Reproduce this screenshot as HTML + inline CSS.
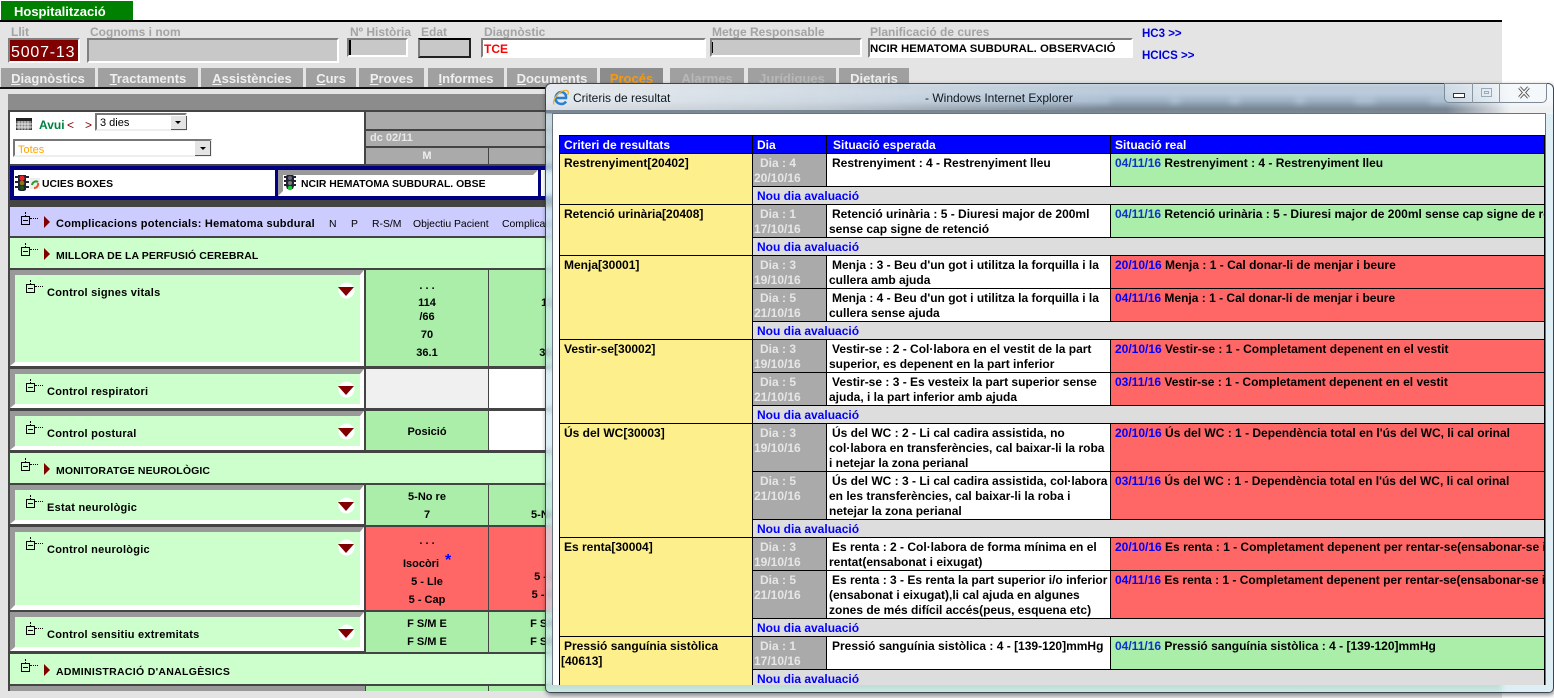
<!DOCTYPE html>
<html><head><meta charset="utf-8"><title>Hospitalització</title>
<style>
html,body{margin:0;padding:0;background:#fff}
#p{position:relative;width:1554px;height:698px;overflow:hidden;background:#fff;font:bold 12px/15px "Liberation Sans",sans-serif;color:#000}
#p div,#p svg,#p span.a{position:absolute}
.t{white-space:nowrap}
.l{color:#a3a3a3;top:25px;white-space:nowrap}
.in{box-sizing:border-box;border:2px solid;border-color:#808080 #fff #fff #808080;background:#c8c8c8}
.wh{background:#fff}
.tab{background:#a0a0a0;top:68px;height:19px;text-align:center;color:#efefef;font-size:13px;line-height:21px;white-space:nowrap;overflow:hidden}
.g{background:#ccffcc}
.dk{background:#444}
.f{font-size:11px;line-height:15px;letter-spacing:.25px;white-space:nowrap}
.c{width:122px;text-align:center;font-size:11px;line-height:15px;white-space:nowrap}
.cell{width:122px}
.tr{width:9px;height:9px;box-sizing:border-box;border:1px solid #000;background:transparent}
.tr:before{content:"";position:absolute;left:1px;top:3px;width:5px;height:1px;background:#000}
.tr:after{content:"";position:absolute;left:3px;top:-5px;height:4px;border-left:1px dotted #000}
.dot{width:8px;border-top:1px dotted #000;height:0}
.s{font-size:10.400px;font-weight:normal;top:217px;white-space:nowrap}
table{border-collapse:collapse;table-layout:fixed;width:985px;position:absolute;left:6px;top:21px;font:bold 12px/15px "Liberation Sans",sans-serif}
td{border:1px solid #000;padding:2px 0 0 1px;vertical-align:top;white-space:nowrap;overflow:hidden}
.h td{background:#0000ff;color:#fff;padding:2px 0 0 4px;vertical-align:top}
.y{background:#fdf08c;padding-left:4px!important}
.d{background:#aaaaaa;color:#e6e6e6;padding-left:1px}
.d i,.e i,.y i{font-style:normal;padding-left:3px}
.d i{padding-left:6px}
.e{background:#fff;padding-left:2px}
.ok{background:#aaeeaa;padding-left:4px}
.ko{background:#ff6666;padding-left:4px}
.ok b{color:#0a36c8}
.ko b{color:#0000ff}
.n{background:#dddddd;color:#0000ff;padding:2px 0 0 4px}
</style></head><body><div id="p">

<div style="left:0;top:0;width:1502px;height:698px;background:#e4e4e4"></div>
<div style="left:0;top:0;width:1502px;height:20px;background:#fff"></div>
<div style="left:1px;top:1px;width:132px;height:19px;background:#008000;color:#fff;line-height:21px;text-indent:13px;font-size:13px">Hospitalització</div>
<div style="left:0;top:20px;width:1502px;height:2px;background:#000"></div>

<div class="l" style="left:11px">Llit</div>
<div class="in" style="left:8px;top:38px;width:72px;height:25px;background:#800000;color:#fff;font:16px/25px 'Liberation Sans',sans-serif;letter-spacing:.8px;text-indent:1px">5007-13</div>
<div class="l" style="left:90px">Cognoms i nom</div>
<div class="in" style="left:87px;top:38px;width:252px;height:25px"></div>
<div class="l" style="left:350px">Nº Història</div>
<div class="in" style="left:347px;top:38px;width:61px;height:19px"><div style="left:0;top:0;width:2px;height:15px;background:#000"></div></div>
<div class="l" style="left:421px">Edat</div>
<div class="in" style="left:418px;top:38px;width:53px;height:20px;border-color:#000 #222 #222 #808080"></div>
<div class="l" style="left:484px">Diagnòstic</div>
<div class="in" style="left:481px;top:38px;width:225px;height:20px;background:#fff;color:#f00;line-height:18px;font-size:12px;text-indent:1px;font-weight:bold">TCE</div>
<div class="l" style="left:712px">Metge Responsable</div>
<div class="in" style="left:710px;top:38px;width:152px;height:19px;border-left:2px solid #808080"><div style="left:0;top:2px;width:1px;height:11px;background:#000"></div></div>
<div class="l" style="left:870px">Planificació de cures</div>
<div class="in" style="left:868px;top:38px;width:265px;height:20px;background:#fff;line-height:18px;font-size:11.400px;text-indent:0;white-space:nowrap">NCIR HEMATOMA SUBDURAL. OBSERVACIÓ</div>
<div class="t" style="left:1142px;top:27px;color:#0000d8;font-size:11.500px">HC3 &gt;&gt;</div>
<div class="t" style="left:1142px;top:49px;color:#0000d8;font-size:11.500px">HCICS &gt;&gt;</div>

<div class="tab" style="left:1px;width:94px"><u>D</u>iagnòstics</div>
<div class="tab" style="left:98px;width:100px"><u>T</u>ractaments</div>
<div class="tab" style="left:201px;width:102px"><u>A</u>ssistències</div>
<div class="tab" style="left:306px;width:50px"><u>C</u>urs</div>
<div class="tab" style="left:359px;width:65px"><u>P</u>roves</div>
<div class="tab" style="left:428px;width:76px"><u>I</u>nformes</div>
<div class="tab" style="left:507px;width:90px"><u>D</u>ocuments</div>
<div class="tab" style="left:600px;width:63px;background:#8c8c8c;color:#f59a10">Procés</div>
<div class="tab" style="left:670px;width:74px;color:#b8b8b8">Alarmes</div>
<div class="tab" style="left:748px;width:88px;color:#b8b8b8">Jurídiques</div>
<div class="tab" style="left:839px;width:70px">Dietaris</div>
<div style="left:0;top:87px;width:1502px;height:2px;background:#111"></div>

<!-- panel -->
<div style="left:8px;top:94px;width:1494px;height:16px;background:#8c8c8c"></div>
<div style="left:1110px;top:98px;width:60px;height:8px;background:#333"></div>
<div style="left:1180px;top:98px;width:50px;height:8px;background:#333"></div>
<div style="left:1240px;top:98px;width:55px;height:8px;background:#333"></div>
<div style="left:1305px;top:98px;width:50px;height:8px;background:#333"></div>
<div style="left:1375px;top:98px;width:55px;height:8px;background:#333"></div>
<div class="dk" style="left:8px;top:110px;width:1494px;height:581px"></div>

<div class="wh" style="left:10px;top:112px;width:354px;height:52px"></div>
<svg style="left:16px;top:118px" width="16" height="12" viewBox="0 0 16 12"><rect width="16" height="12" fill="#888"/><rect width="16" height="3" fill="#222"/><path d="M0 0V12M16 0V12M0 12H16" stroke="#111"/><path d="M3 3V12M6 3V12M9 3V12M12 3V12M0 6H16M0 9H16" stroke="#fff" stroke-width=".7"/></svg>
<div class="t" style="left:39px;top:118px;color:#008040">Avui</div>
<div class="t" style="left:67px;top:118px;color:#800000;font-weight:normal">&lt;</div>
<div class="t" style="left:85px;top:118px;color:#800000;font-weight:normal">&gt;</div>
<div class="in" style="left:95px;top:113px;width:92px;height:18px;background:#fff;font-weight:normal;font-size:11px;line-height:16px;text-indent:3px;border-color:#777 #eee #eee #777">3 dies<div style="left:74px;top:1px;width:15px;height:13px;background:#e4e4e4;border-right:1px solid #555;border-bottom:1px solid #555"></div><div style="left:78px;top:6px;border:3px solid transparent;border-top:3px solid #000;border-bottom:0"></div></div>
<div class="in" style="left:13px;top:139px;width:199px;height:18px;background:#fff;font-weight:normal;font-size:11px;line-height:18px;color:#ffa500;text-indent:3px;border-color:#777 #eee #eee #777">Totes<div style="left:180px;top:0;width:15px;height:14px;background:#e4e4e4;border-right:1px solid #555;border-bottom:1px solid #555"></div><div style="left:185px;top:6px;border:3px solid transparent;border-top:3px solid #000;border-bottom:0"></div></div>

<div style="left:366px;top:112px;width:1136px;height:17px;background:#aaa"></div>
<div style="left:366px;top:131px;width:1136px;height:15px;background:#aaa;color:#e8e8e8;font-size:11px;line-height:15px;text-indent:4px">dc 02/11</div>
<div style="left:366px;top:148px;width:122px;height:16px;background:#aaa;color:#eee;font-size:11px;line-height:16px;text-align:center">M</div>
<div style="left:489px;top:148px;width:122px;height:16px;background:#aaa"></div>

<div style="left:10px;top:166px;width:1492px;height:34px;background:#000080"></div>
<div class="wh" style="left:14px;top:170px;width:261px;height:26px"></div>
<div class="wh" style="left:278px;top:170px;width:260px;height:26px"></div>
<svg style="left:278px;top:170px" width="260" height="26"><path d="M0 0H260L255 5H5V21L0 26Z" fill="#999"/></svg>
<div class="wh" style="left:541px;top:170px;width:960px;height:26px"></div>
<svg style="left:15px;top:175px" width="25" height="16" viewBox="0 0 25 16"><path d="M0 1H3V0H11V1H14V3H11V6H14V8H11V11H14V13H11V15L9 16H5L3 15V13H0V11H3V8H0V6H3V3H0Z" fill="#223"/><circle cx="7" cy="3.200" r="2.600" fill="#f02020"/><circle cx="7" cy="8" r="2.300" fill="#8a7a10"/><circle cx="7" cy="12.800" r="2.100" fill="#1a5a1a"/><rect x="15" y="3" width="10" height="11" fill="#eee"/><path d="M17 10a4 4 0 0 1 6-3" stroke="#2a9a2a" stroke-width="2" fill="none"/><path d="M23 8a4 4 0 0 1-4 5" stroke="#e05a30" stroke-width="2" fill="none"/></svg>
<div class="f" style="left:42px;top:177px;font-size:10.400px;letter-spacing:0">UCIES BOXES</div>
<svg style="left:284px;top:174px" width="12" height="18" viewBox="0 0 12 18"><path d="M0 2h2l1-1h6l1 1h2v2h-2v2h2v2h-2v2h2v2h-2l-1 3H3l-1-3H0v-2h2V8H0V6h2V4H0z" fill="#223"/><circle cx="6" cy="4" r="2" fill="#667"/><circle cx="6" cy="9" r="2" fill="#778"/><circle cx="6" cy="14" r="2.300" fill="#10d030"/></svg>
<div class="f" style="left:301px;top:177px;font-size:10.400px;letter-spacing:0">NCIR HEMATOMA SUBDURAL. OBSE</div>

<!-- lavender -->
<div style="left:10px;top:207px;width:1492px;height:29px;background:#ccccff"></div>
<div class="tr" style="left:21px;top:216px"></div><div class="dot" style="left:30px;top:218px"></div>
<svg style="left:44px;top:216px" width="7" height="12"><path d="M0 0L6 6L0 12Z" fill="#800000"/></svg>
<div class="f" style="left:56px;top:217px">Complicacions potencials: Hematoma subdural</div>
<div class="s" style="left:329px">N</div>
<div class="s" style="left:351px">P</div>
<div class="s" style="left:372px">R-S/M</div>
<div class="s" style="left:413px">Objectiu Pacient</div>
<div class="s" style="left:502px">Complicacions</div>

<!-- group rows -->
<div class="g" style="left:10px;top:238px;width:1492px;height:30px"></div>
<div class="tr" style="left:21px;top:247px"></div><div class="dot" style="left:30px;top:249px"></div>
<svg style="left:44px;top:248px" width="7" height="12"><path d="M0 0L6 6L0 12Z" fill="#800000"/></svg>
<div class="f" style="left:56px;top:249px;font-size:10.500px;letter-spacing:.1px">MILLORA DE LA PERFUSIÓ CEREBRAL</div>

<!-- row Control signes -->
<svg style="left:10px;top:270px" width="354" height="96"><rect width="354" height="96" fill="#999"/><path d="M354 0V96H0L5 92H350V5Z" fill="#fff"/><rect x="5" y="5" width="345" height="87" fill="#ccffcc"/></svg>
<div class="tr" style="left:26px;top:284px"></div><div class="dot" style="left:35px;top:286px"></div>
<div class="f" style="left:47px;top:286px">Control signes vitals</div>
<svg style="left:338px;top:282px" width="17" height="17"><circle cx="8.500" cy="8.500" r="8" fill="#fff"/><path d="M0 5H16L8 14Z" fill="#800000"/></svg>
<div class="cell" style="left:366px;top:270px;height:96px;background:#aaeeaa"></div>
<div class="cell" style="left:489px;top:270px;height:96px;background:#aaeeaa"></div>
<div class="c" style="left:366px;top:279px">. . .</div>
<div class="c" style="left:366px;top:296px">114</div>
<div class="c" style="left:366px;top:310px">/66</div>
<div class="c" style="left:366px;top:328px">70</div>
<div class="c" style="left:366px;top:346px">36.1</div>
<div class="c" style="left:489px;top:296px">114</div>
<div class="c" style="left:489px;top:346px">36.1</div>

<!-- Control respiratori -->
<svg style="left:10px;top:369px" width="354" height="39"><rect width="354" height="39" fill="#999"/><path d="M354 0V39H0L5 35H350V5Z" fill="#fff"/><rect x="5" y="5" width="345" height="30" fill="#ccffcc"/></svg>
<div class="tr" style="left:26px;top:383px"></div><div class="dot" style="left:35px;top:385px"></div>
<div class="f" style="left:47px;top:385px">Control respiratori</div>
<svg style="left:338px;top:381px" width="17" height="17"><circle cx="8.500" cy="8.500" r="8" fill="#fff"/><path d="M0 5H16L8 14Z" fill="#800000"/></svg>
<div class="cell" style="left:366px;top:369px;height:39px;background:#f0f0f0"></div>
<div class="cell" style="left:489px;top:369px;height:39px;background:#fff"></div>

<!-- Control postural -->
<svg style="left:10px;top:411px" width="354" height="39"><rect width="354" height="39" fill="#999"/><path d="M354 0V39H0L5 35H350V5Z" fill="#fff"/><rect x="5" y="5" width="345" height="30" fill="#ccffcc"/></svg>
<div class="tr" style="left:26px;top:425px"></div><div class="dot" style="left:35px;top:427px"></div>
<div class="f" style="left:47px;top:427px">Control postural</div>
<svg style="left:338px;top:423px" width="17" height="17"><circle cx="8.500" cy="8.500" r="8" fill="#fff"/><path d="M0 5H16L8 14Z" fill="#800000"/></svg>
<div class="cell" style="left:366px;top:411px;height:39px;background:#aaeeaa"></div>
<div class="cell" style="left:489px;top:411px;height:39px;background:#fff"></div>
<div class="c" style="left:366px;top:425px">Posició</div>

<!-- Monitoratge -->
<div class="g" style="left:10px;top:453px;width:1492px;height:30px"></div>
<div class="tr" style="left:21px;top:462px"></div><div class="dot" style="left:30px;top:464px"></div>
<svg style="left:44px;top:463px" width="7" height="12"><path d="M0 0L6 6L0 12Z" fill="#800000"/></svg>
<div class="f" style="left:56px;top:464px;font-size:10.500px;letter-spacing:.1px">MONITORATGE NEUROLÒGIC</div>

<!-- Estat -->
<svg style="left:10px;top:485px" width="354" height="39"><rect width="354" height="39" fill="#999"/><path d="M354 0V39H0L5 35H350V5Z" fill="#fff"/><rect x="5" y="5" width="345" height="30" fill="#ccffcc"/></svg>
<div class="tr" style="left:26px;top:499px"></div><div class="dot" style="left:35px;top:501px"></div>
<div class="f" style="left:47px;top:501px">Estat neurològic</div>
<svg style="left:338px;top:497px" width="17" height="17"><circle cx="8.500" cy="8.500" r="8" fill="#fff"/><path d="M0 5H16L8 14Z" fill="#800000"/></svg>
<div class="cell" style="left:366px;top:485px;height:40px;background:#aaeeaa"></div>
<div class="cell" style="left:489px;top:485px;height:40px;background:#aaeeaa"></div>
<div class="c" style="left:366px;top:490px">5-No re</div>
<div class="c" style="left:366px;top:508px">7</div>
<div class="c" style="left:489px;top:508px">5-No re</div>

<!-- Control neurologic -->
<svg style="left:10px;top:527px" width="354" height="83"><rect width="354" height="83" fill="#999"/><path d="M354 0V83H0L5 78H350V5Z" fill="#fff"/><rect x="5" y="5" width="345" height="73" fill="#ccffcc"/></svg>
<div class="tr" style="left:26px;top:541px"></div><div class="dot" style="left:35px;top:543px"></div>
<div class="f" style="left:47px;top:543px">Control neurològic</div>
<svg style="left:338px;top:539px" width="17" height="17"><circle cx="8.500" cy="8.500" r="8" fill="#fff"/><path d="M0 5H16L8 14Z" fill="#800000"/></svg>
<div class="cell" style="left:366px;top:527px;height:83px;background:#ff6666"></div>
<div class="cell" style="left:489px;top:527px;height:83px;background:#ff6666"></div>
<div class="c" style="left:366px;top:534px">. . .</div>
<div class="c" style="left:360px;top:557px">Isocòri</div>
<div class="t" style="left:445px;top:553px;color:#0000ff;font-size:16px">*</div>
<div class="c" style="left:366px;top:575px">5 - Lle</div>
<div class="c" style="left:366px;top:593px">5 - Cap</div>
<div class="c" style="left:489px;top:570px">5 - Lle</div>
<div class="c" style="left:489px;top:588px">5 - Cap</div>

<!-- Sensitiu -->
<svg style="left:10px;top:612px" width="354" height="39"><rect width="354" height="39" fill="#999"/><path d="M354 0V39H0L5 35H350V5Z" fill="#fff"/><rect x="5" y="5" width="345" height="30" fill="#ccffcc"/></svg>
<div class="tr" style="left:26px;top:626px"></div><div class="dot" style="left:35px;top:628px"></div>
<div class="f" style="left:47px;top:628px">Control sensitiu extremitats</div>
<svg style="left:338px;top:624px" width="17" height="17"><circle cx="8.500" cy="8.500" r="8" fill="#fff"/><path d="M0 5H16L8 14Z" fill="#800000"/></svg>
<div class="cell" style="left:366px;top:612px;height:40px;background:#aaeeaa"></div>
<div class="cell" style="left:489px;top:612px;height:40px;background:#aaeeaa"></div>
<div class="c" style="left:366px;top:617px">F S/M E</div>
<div class="c" style="left:366px;top:635px">F S/M E</div>
<div class="c" style="left:489px;top:617px">F S/M E</div>
<div class="c" style="left:489px;top:635px">F S/M E</div>

<!-- Administracio -->
<div class="g" style="left:10px;top:654px;width:1492px;height:30px"></div>
<div class="tr" style="left:21px;top:663px"></div><div class="dot" style="left:30px;top:665px"></div>
<svg style="left:44px;top:664px" width="7" height="12"><path d="M0 0L6 6L0 12Z" fill="#800000"/></svg>
<div class="f" style="left:56px;top:665px;font-size:10.500px;letter-spacing:.3px">ADMINISTRACIÓ D'ANALGÈSICS</div>
<div style="left:10px;top:686px;width:355px;height:5px;background:#999"></div>
<div style="left:366px;top:686px;width:122px;height:5px;background:#aaeeaa"></div>
<div style="left:489px;top:686px;width:1013px;height:5px;background:#aaeeaa"></div>

<!-- IE window -->
<div style="left:545px;top:83px;width:1009px;height:610px;box-sizing:border-box;border:1px solid #3c4650;border-radius:6px 6px 5px 5px;background:linear-gradient(180deg,rgba(196,212,228,.82) 0,rgba(178,202,226,.82) 17px,rgba(120,135,150,.85) 25px,rgba(120,135,150,.85) 29px,rgba(208,232,240,.72) 30px,rgba(208,232,240,.72) 100%);backdrop-filter:blur(3px);box-shadow:1px 2px 5px rgba(0,0,0,.45);overflow:hidden">
 <div style="left:0;top:0;width:560px;height:26px;background:linear-gradient(90deg,rgba(238,240,242,.85),rgba(220,226,232,.7) 50%,rgba(220,226,232,0))"></div>
 <div style="left:900px;top:0;width:108px;height:30px;background:linear-gradient(90deg,rgba(255,255,255,0),rgba(255,255,255,.85) 60%)"></div>
</div>
<svg style="left:552px;top:89px" width="18" height="17" viewBox="0 0 18 17"><path d="M4.500 9H14C14.500 5 11.500 3 9.500 3C6 3 3.500 6 3.500 9.500C3.500 13 6.500 15 9.500 15C11.500 15 13 14 14 12.500" stroke="#2b7fd0" stroke-width="2.500" fill="none"/><path d="M2 15.500C-.5 11 8 0 15 1.500C17 2.500 16.500 4.500 15.500 6" stroke="#eeb12e" stroke-width="1.300" fill="none"/></svg>
<div class="t" style="left:573px;top:91px;font-weight:normal;font-size:12px;color:#10181f">Criteris de resultat</div>
<div class="t" style="left:925px;top:91px;font-weight:normal;font-size:12px;color:#10181f">- Windows Internet Explorer</div>

<!-- window controls -->
<div style="left:1444px;top:83px;width:103px;height:20px;box-sizing:border-box;border:1px solid #7e8a96;border-top:0;border-radius:0 0 5px 5px;background:rgba(240,246,250,.35)"></div>
<div style="left:1472px;top:83px;width:1px;height:20px;background:#8a96a2"></div>
<div style="left:1499px;top:83px;width:1px;height:20px;background:#8a96a2"></div>
<div style="left:1453px;top:93px;width:12px;height:5px;box-sizing:border-box;border:1px solid #333;background:#fff"></div>
<div style="left:1481px;top:88px;width:11px;height:9px;box-sizing:border-box;border:1px solid #9ab;background:transparent"></div>
<div style="left:1484px;top:91px;width:5px;height:3px;box-sizing:border-box;border:1px solid #9ab"></div>
<svg style="left:1517px;top:86px" width="14" height="13" viewBox="0 0 14 13"><path d="M2.500 1.500L11.500 11.500M11.500 1.500L2.500 11.500" stroke="#555" stroke-width="3.400"/><path d="M2.500 1.500L11.500 11.500M11.500 1.500L2.500 11.500" stroke="#f4f4f4" stroke-width="1.600"/></svg>

<!-- client -->
<div style="left:552px;top:113px;width:994px;height:572px;background:#fff;box-sizing:border-box;border:1px solid #6a7480;border-bottom:0;overflow:hidden">
<div style="left:6px;top:21px;width:986px;height:560px;background:#dddddd"></div>
<table>
<colgroup><col style="width:193px"><col style="width:74px"><col style="width:284px"><col style="width:434px"></colgroup>
<tr class="h" style="height:18px"><td>Criteri de resultats</td><td>Dia</td><td style="padding-left:6px">Situació esperada</td><td>Situació real</td></tr>

<tr style="height:33px"><td class="y" rowspan="2">Restrenyiment[20402]</td><td class="d"><i>Dia : 4</i><br>20/10/16</td><td class="e"><i>Restrenyiment : 4 - Restrenyiment lleu</i></td><td class="ok"><b>04/11/16</b> Restrenyiment : 4 - Restrenyiment lleu</td></tr>
<tr style="height:18px"><td class="n" colspan="3">Nou dia avaluació</td></tr>

<tr style="height:33px"><td class="y" rowspan="2">Retenció urinària[20408]</td><td class="d"><i>Dia : 1</i><br>17/10/16</td><td class="e"><i>Retenció urinària : 5 - Diuresi major de 200ml</i><br>sense cap signe de retenció</td><td class="ok"><b>04/11/16</b> Retenció urinària : 5 - Diuresi major de 200ml sense cap signe de retenció</td></tr>
<tr style="height:18px"><td class="n" colspan="3">Nou dia avaluació</td></tr>

<tr style="height:33px"><td class="y" rowspan="3">Menja[30001]</td><td class="d"><i>Dia : 3</i><br>19/10/16</td><td class="e"><i>Menja : 3 - Beu d'un got i utilitza la forquilla i la</i><br>cullera amb ajuda</td><td class="ko"><b>20/10/16</b> Menja : 1 - Cal donar-li de menjar i beure</td></tr>
<tr style="height:33px"><td class="d"><i>Dia : 5</i><br>21/10/16</td><td class="e"><i>Menja : 4 - Beu d'un got i utilitza la forquilla i la</i><br>cullera sense ajuda</td><td class="ko"><b>04/11/16</b> Menja : 1 - Cal donar-li de menjar i beure</td></tr>
<tr style="height:18px"><td class="n" colspan="3">Nou dia avaluació</td></tr>

<tr style="height:33px"><td class="y" rowspan="3">Vestir-se[30002]</td><td class="d"><i>Dia : 3</i><br>19/10/16</td><td class="e"><i>Vestir-se : 2 - Col·labora en el vestit de la part</i><br>superior, es depenent en la part inferior</td><td class="ko"><b>20/10/16</b> Vestir-se : 1 - Completament depenent en el vestit</td></tr>
<tr style="height:33px"><td class="d"><i>Dia : 5</i><br>21/10/16</td><td class="e"><i>Vestir-se : 3 - Es vesteix la part superior sense</i><br>ajuda, i la part inferior amb ajuda</td><td class="ko"><b>03/11/16</b> Vestir-se : 1 - Completament depenent en el vestit</td></tr>
<tr style="height:18px"><td class="n" colspan="3">Nou dia avaluació</td></tr>

<tr style="height:48px"><td class="y" rowspan="3">Ús del WC[30003]</td><td class="d"><i>Dia : 3</i><br>19/10/16</td><td class="e"><i>Ús del WC : 2 - Li cal cadira assistida, no</i><br>col·labora en transferències, cal baixar-li la roba<br>i netejar la zona perianal</td><td class="ko"><b>20/10/16</b> Ús del WC : 1 - Dependència total en l'ús del WC, li cal orinal</td></tr>
<tr style="height:48px"><td class="d"><i>Dia : 5</i><br>21/10/16</td><td class="e"><i>Ús del WC : 3 - Li cal cadira assistida, col·labora</i><br>en les transferències, cal baixar-li la roba i<br>netejar la zona perianal</td><td class="ko"><b>03/11/16</b> Ús del WC : 1 - Dependència total en l'ús del WC, li cal orinal</td></tr>
<tr style="height:18px"><td class="n" colspan="3">Nou dia avaluació</td></tr>

<tr style="height:33px"><td class="y" rowspan="3">Es renta[30004]</td><td class="d"><i>Dia : 3</i><br>19/10/16</td><td class="e"><i>Es renta : 2 - Col·labora de forma mínima en el</i><br>rentat(ensabonat i eixugat)</td><td class="ko"><b>20/10/16</b> Es renta : 1 - Completament depenent per rentar-se(ensabonar-se i eixugar-se)</td></tr>
<tr style="height:48px"><td class="d"><i>Dia : 5</i><br>21/10/16</td><td class="e"><i>Es renta : 3 - Es renta la part superior i/o inferior</i><br>(ensabonat i eixugat),li cal ajuda en algunes<br>zones de més difícil accés(peus, esquena etc)</td><td class="ko"><b>04/11/16</b> Es renta : 1 - Completament depenent per rentar-se(ensabonar-se i eixugar-se)</td></tr>
<tr style="height:18px"><td class="n" colspan="3">Nou dia avaluació</td></tr>

<tr style="height:33px"><td class="y" rowspan="2" style="padding-left:1px!important"><i>Pressió sanguínia sistòlica</i><br>[40613]</td><td class="d"><i>Dia : 1</i><br>17/10/16</td><td class="e"><i>Pressió sanguínia sistòlica : 4 - [139-120]mmHg</i></td><td class="ok"><b>04/11/16</b> Pressió sanguínia sistòlica : 4 - [139-120]mmHg</td></tr>
<tr style="height:18px"><td class="n" colspan="3">Nou dia avaluació</td></tr>
</table>
</div>

</div></body></html>
